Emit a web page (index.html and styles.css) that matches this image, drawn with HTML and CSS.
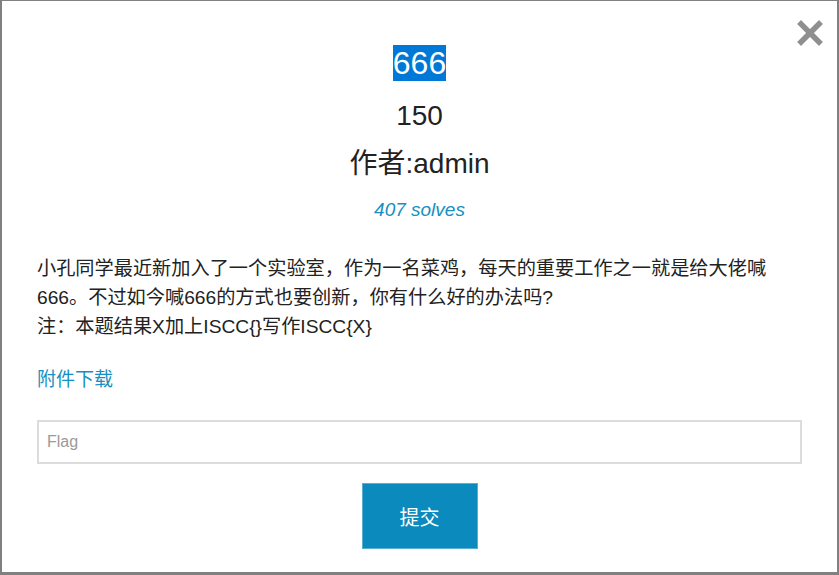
FILE: index.html
```html
<!DOCTYPE html>
<html lang="zh">
<head>
<meta charset="utf-8">
<title>666</title>
<link rel="stylesheet" href="styles.css">
</head>
<body>
<div class="modal">
  <button class="close" aria-label="Close">
    <svg width="26" height="26" viewBox="0 0 26 26"><path d="M4 4 L22 22 M22 4 L4 22" stroke="#8f8f8f" stroke-width="5.5" stroke-linecap="square" fill="none"/></svg>
  </button>
  <div class="head">
    <h2 class="name"><span class="sel">666</span></h2>
    <h3 class="value">150</h3>
    <h3 class="author">作者:admin</h3>
    <p class="solves">407 solves</p>
  </div>
  <div class="desc">
    小孔同学最近新加入了一个实验室，作为一名菜鸡，每天的重要工作之一就是给大佬喊<br>
    666。不过如今喊666的方式也要创新，你有什么好的办法吗?<br>
    注：本题结果X加上ISCC{}写作ISCC{X}
  </div>
  <a class="file" href="#">附件下载</a>
  <form class="form">
    <input class="flag" type="text" placeholder="Flag">
    <button class="submit" type="button">提交</button>
  </form>
</div>
</body>
</html>
```
FILE: styles.css
```css
html, body {
  margin: 0;
  padding: 0;
  background: #fff;
}
body {
  font-family: "Liberation Sans", Arial, "Noto Sans CJK SC", sans-serif;
  color: #212529;
}
.modal {
  position: relative;
  box-sizing: border-box;
  width: 839px;
  height: 575px;
  border-style: solid;
  border-color: #808080;
  border-width: 1px 2px 3px 2px;
  padding: 0 35px;
  display: flex;
  flex-direction: column;
}
.close {
  position: absolute;
  top: 19px;
  right: 14px;
  padding: 0;
  border: 0;
  background: none;
  width: 26px;
  height: 26px;
}
.close svg { display: block; }
.head {
  display: flex;
  flex-direction: column;
  align-items: center;
  text-align: center;
}
.name {
  margin: 44px 0 0;
  font-size: 32px;
  font-weight: normal;
  line-height: 37px;
}
.sel {
  background: #0078d7;
  color: #fff;
}
.value, .author {
  margin: 0;
  font-size: 28px;
  font-weight: normal;
  line-height: 40px;
  color: #222;
}
.value { margin-top: 14px; }
.author { margin-top: 8px; font-family: "Liberation Sans", Arial, "Noto Sans CJK SC", sans-serif; }
.solves {
  margin: 13px 0 0;
  font-size: 19px;
  line-height: 26px;
  font-style: italic;
  color: #1590c2;
}
.desc {
  margin-top: 31px;
  font-size: 19.2px;
  line-height: 29px;
  color: #222;
}
.file {
  margin-top: 25px;
  align-self: flex-start;
  font-size: 19px;
  line-height: 28px;
  color: #1590c2;
  text-decoration: none;
}
.form {
  margin-top: 26px;
  display: flex;
  flex-direction: column;
  align-items: center;
}
.flag {
  box-sizing: border-box;
  width: 100%;
  height: 44px;
  border: 2px solid #dcdcdc;
  padding: 0 8px;
  font-family: "Liberation Sans", Arial, sans-serif;
  font-size: 16px;
  color: #333;
  outline: none;
}
.flag::placeholder { color: #9a9a9a; }
.submit {
  margin-top: 19px;
  width: 116px;
  height: 66px;
  border: 1px solid #5aaed1;
  background: #0a8abd;
  color: #fff;
  font-family: "Noto Sans CJK SC", sans-serif;
  font-size: 20px;
  cursor: pointer;
}
```
